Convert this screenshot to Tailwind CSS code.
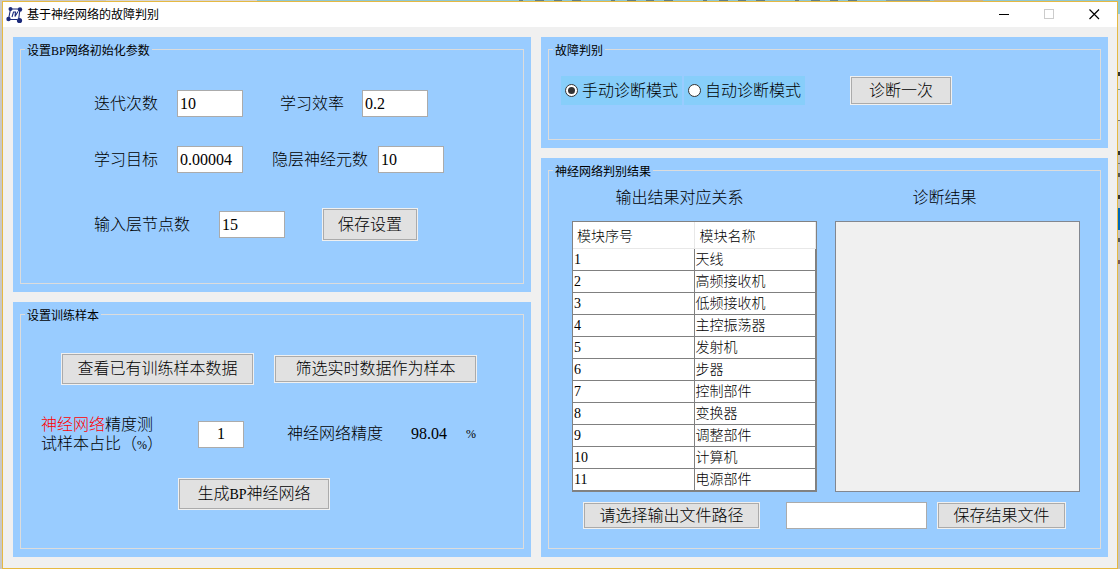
<!DOCTYPE html>
<html lang="zh-CN">
<head>
<meta charset="utf-8">
<title>基于神经网络的故障判别</title>
<script src="https://cdn.jsdelivr.net/npm/@tailwindcss/browser@4"></script>
</head>
<body class="min-h-screen flex flex-col bg-[#c8c8c8] text-black text-base leading-5 font-light font-['Liberation_Serif','Noto_Sans_CJK_SC',serif]">

<!-- Desktop strip above the window -->
<div class="flex h-px bg-[#8ec8d4]" aria-hidden="true">
  <span class="w-[106px] bg-[#c8c8c8]"></span>
  <span class="w-[151px] bg-[#d6d6d6]"></span>
  <span class="flex-1"></span>
  <span class="w-[340px] bg-[repeating-linear-gradient(90deg,#5d8088_0_4px,#8ec8d4_4px_16px,#5d8088_16px_25px,#8ec8d4_25px_35px,#5d8088_35px_43px,#8ec8d4_43px_53px,#5d8088_53px_62px,#8ec8d4_62px_92px)]"></span>
  <span class="w-[27px]"></span>
  <span class="w-[44px] bg-[#7f9ea6]"></span>
  <span class="w-1"></span>
  <span class="w-[49px] bg-[#c9b08f]"></span>
  <span class="w-[137px]"></span>
</div>

<div class="flex flex-1 pl-[2px]">
<div class="flex flex-1 flex-col border border-[#e6b942] bg-[#f0f0f0]">
  <header class="flex h-[25px] items-center bg-white">
    <svg class="ml-[3px] h-[18px] w-[18px]" viewBox="0 0 18 18" fill="none" stroke="#1b2a7b" aria-hidden="true">
      <path d="M4.500 3H14L12.500 14.500M4.500 3L2.500 13.500H11" stroke-width="1.100"/>
      <path d="M6 11L7.500 6H9.500L9 10.500L12 5.500" stroke-width="1.100"/>
      <g fill="#1b2a7b" stroke="none"><circle cx="4.500" cy="3" r="2"/><circle cx="14" cy="3.500" r="2.200"/><circle cx="2.500" cy="13" r="2.200"/><circle cx="13.500" cy="14.500" r="2.600"/></g>
    </svg>
    <h1 class="ml-[3px] flex-1 pb-px text-xs font-normal font-['Noto_Sans_CJK_SC',sans-serif]">基于神经网络的故障判别</h1>
    <button type="button" aria-label="最小化" class="flex h-full w-[45px] items-center justify-center">
      <svg class="h-[11px] w-[11px]" viewBox="0 0 11 11" shape-rendering="crispEdges"><path d="M0 5.500H10" stroke="#000"/></svg>
    </button>
    <button type="button" aria-label="最大化" disabled class="flex h-full w-[45px] items-center justify-center">
      <svg class="h-[11px] w-[11px]" viewBox="0 0 11 11" fill="none" shape-rendering="crispEdges"><path d="M.5 .5H9.500V9.500H.5Z" stroke="#ccc"/></svg>
    </button>
    <button type="button" aria-label="关闭" class="flex h-full w-[45px] items-center justify-center">
      <svg class="h-[11px] w-[11px]" viewBox="0 0 11 11" fill="none"><path d="M.5 .5L10 10M10 .5L.5 10" stroke="#000" stroke-width="1.200"/></svg>
    </button>
  </header>

  <main class="grid flex-1 grid-cols-[518fr_567fr] gap-[10px] pt-[10px] pr-[9px] pb-[11px] pl-[10px]">
    <div class="flex flex-col gap-[10px]">

      <form class="flex flex-1 bg-[#99ccff] px-[7px] pt-[3px] pb-2">
        <fieldset class="flex-1 border border-[#dcdcdc]">
          <legend class="ml-[4px] px-[2px] pt-1 text-xs leading-[14px] font-normal">设置<span class="font-['Liberation_Serif']">BP</span>网络初始化参数</legend>
          <div class="pt-8 pl-[73px]">
            <div class="flex items-center">
              <label for="iter">迭代次数</label>
              <input id="iter" value="10" class="ml-[19px] h-[27px] w-[66px] border border-[#ababab] bg-white px-[2px]">
              <label for="rate" class="ml-[37px]">学习效率</label>
              <input id="rate" value="0.2" class="ml-[18px] h-[27px] w-[66px] border border-[#ababab] bg-white px-[2px]">
            </div>
            <div class="mt-[29px] flex items-center">
              <label for="goal">学习目标</label>
              <input id="goal" value="0.00004" class="ml-[19px] h-[27px] w-[66px] border border-[#ababab] bg-white px-[2px]">
              <label for="hidden-n" class="ml-[29px]">隐层神经元数</label>
              <input id="hidden-n" value="10" class="ml-[10px] h-[27px] w-[66px] border border-[#ababab] bg-white px-[2px]">
            </div>
            <div class="mt-[36px] flex items-center">
              <label for="nodes">输入层节点数</label>
              <input id="nodes" value="15" class="ml-[29px] h-[27px] w-[66px] border border-[#ababab] bg-white px-[2px]">
              <button type="button" class="ml-[38px] h-[31px] w-[94px] border border-[#ababab] bg-[#e1e1e1] outline outline-[#f0f0f0]">保存设置</button>
            </div>
          </div>
        </fieldset>
      </form>

      <form class="flex flex-1 bg-[#99ccff] px-[7px] pt-[3px] pb-2">
        <fieldset class="flex-1 border border-[#dcdcdc]">
          <legend class="ml-[4px] px-[2px] pt-1 text-xs leading-[14px] font-normal">设置训练样本</legend>
          <div class="pt-[31px]">
            <div class="flex items-center gap-[22px] pl-[41px]">
              <button type="button" class="h-[30px] w-[191px] border border-[#ababab] bg-[#e1e1e1] outline outline-[#f0f0f0]">查看已有训练样本数据</button>
              <button type="button" class="h-[26px] w-[201px] border border-[#ababab] bg-[#e1e1e1] outline outline-[#f0f0f0]">筛选实时数据作为样本</button>
            </div>
            <div class="mt-[31px] flex items-center pl-[20px]">
              <label for="ratio" class="w-[157px] leading-[19px]"><span class="text-[#ff0000]">神经网络</span>精度测<br>试样本占比（<span class="text-xs leading-none">%</span>）</label>
              <input id="ratio" value="1" class="h-[27px] w-[46px] border border-[#ababab] bg-white text-center">
              <span class="ml-[43px]">神经网络精度</span>
              <output class="ml-7 w-[55px]">98.04</output>
              <span class="text-xs">%</span>
            </div>
            <button type="button" class="mt-[26px] ml-[158px] h-[30px] w-[150px] border border-[#ababab] bg-[#e1e1e1] outline outline-[#f0f0f0]">生成<span class="text-sm">BP</span>神经网络</button>
          </div>
        </fieldset>
      </form>
    </div>

    <div class="flex flex-col gap-[10px]">
      <form class="flex bg-[#99ccff] px-[7px] pt-[3px] pb-2">
        <fieldset class="flex-1 border border-[#dcdcdc]">
          <legend class="ml-[4px] px-[2px] pt-1 text-xs leading-[14px] font-normal">故障判别</legend>
          <div class="flex items-center pt-[18px] pb-[34px] pl-3">
            <label class="flex h-[29px] w-[121px] items-center gap-1 bg-[#87cefa] pl-1">
              <input type="radio" name="mode" checked class="grid h-[13px] w-[13px] appearance-none place-items-center rounded-full border border-[#333] bg-white before:h-[7px] before:w-[7px] before:rounded-full checked:before:bg-[#333]">手动诊断模式</label>
            <label class="ml-[2px] flex h-[29px] w-[121px] items-center gap-1 bg-[#87cefa] pl-1">
              <input type="radio" name="mode" class="grid h-[13px] w-[13px] appearance-none place-items-center rounded-full border border-[#333] bg-white before:h-[7px] before:w-[7px] before:rounded-full checked:before:bg-[#333]">自动诊断模式</label>
            <button type="button" class="ml-[46px] h-[27px] w-[100px] border border-[#ababab] bg-[#e1e1e1] outline outline-[#f0f0f0]">诊断一次</button>
          </div>
        </fieldset>
      </form>

      <form class="flex flex-1 bg-[#99ccff] px-[7px] pt-[3px] pb-2">
        <fieldset class="flex-1 border border-[#dcdcdc]">
          <legend class="ml-[4px] px-[2px] pt-1 text-xs leading-[14px] font-normal">神经网络判别结果</legend>
          <div class="grid grid-cols-2 gap-x-[18px] pt-[9px] pr-5 pl-[23px]">
            <h2 id="map-title" class="pr-[30px] text-center">输出结果对应关系</h2>
            <h2 id="result-title" class="pr-[26px] text-center">诊断结果</h2>
            <div class="mt-[13px] border border-[#828282] bg-white">
              <table aria-labelledby="map-title" class="w-full table-fixed border-separate border-spacing-0 text-left text-sm leading-[21px]">
                <thead>
                  <tr class="h-[27px]">
                    <th class="border-r border-b border-[#e8e8e8] p-0 pt-[2px] pl-1 font-light">模块序号</th>
                    <th class="border-r border-b border-[#e8e8e8] p-0 pt-[2px] pl-[5px] font-light">模块名称</th>
                  </tr>
                </thead>
                <tbody class="[&_td]:h-[22px] [&_td]:border-r [&_td]:border-b [&_td]:border-[#808080] [&_td]:p-0 [&_td]:pl-px">
                  <tr><td>1</td><td>天线</td></tr>
                  <tr><td>2</td><td>高频接收机</td></tr>
                  <tr><td>3</td><td>低频接收机</td></tr>
                  <tr><td>4</td><td>主控振荡器</td></tr>
                  <tr><td>5</td><td>发射机</td></tr>
                  <tr><td>6</td><td>步器</td></tr>
                  <tr><td>7</td><td>控制部件</td></tr>
                  <tr><td>8</td><td>变换器</td></tr>
                  <tr><td>9</td><td>调整部件</td></tr>
                  <tr><td>10</td><td>计算机</td></tr>
                  <tr><td>11</td><td>电源部件</td></tr>
                </tbody>
              </table>
            </div>
            <textarea readonly aria-labelledby="result-title" class="mt-[13px] resize-none border border-[#828790] bg-[#f0f0f0] p-1"></textarea>
          </div>
          <div class="flex items-center pt-[10px] pl-[35px]">
            <button type="button" class="h-[25px] w-[175px] border border-[#ababab] bg-[#e1e1e1] outline outline-[#f0f0f0]">请选择输出文件路径</button>
            <input aria-label="输出文件路径" class="ml-[27px] h-[27px] w-[141px] border border-[#ababab] bg-white px-[2px]">
            <button type="button" class="ml-[11px] h-[25px] w-[127px] border border-[#ababab] bg-[#e1e1e1] outline outline-[#f0f0f0]">保存结果文件</button>
          </div>
        </fieldset>
      </form>
    </div>
  </main>
</div>

<!-- Desktop strip to the right of the window -->
<div class="flex w-[2px] flex-col bg-[#c4c4c4]" aria-hidden="true">
  <span class="h-[13px] bg-[#8ec8d4]"></span>
  <span class="h-[58px] bg-[#e4e4e4]"></span>
  <span class="h-1 bg-[#333]"></span>
  <span class="h-[13px] bg-[#e4e4e4]"></span>
  <span class="h-px bg-[#6f9a9a]"></span>
  <span class="h-[30px] bg-[#e4e4e4]"></span>
  <span class="h-px bg-[#777]"></span>
  <span class="h-[30px] bg-[#dcdcdc]"></span>
  <span class="h-1 bg-[#333]"></span>
  <span class="h-[8px]"></span>
  <span class="h-px bg-[#777]"></span>
  <span class="h-[9px]"></span>
  <span class="h-1 bg-[#555]"></span>
  <span class="h-[18px]"></span>
  <span class="h-1 bg-[#333]"></span>
  <span class="h-[9px]"></span>
  <span class="h-[22px] bg-[#0067b5]"></span>
  <span class="h-2"></span>
  <span class="h-1 bg-[#555]"></span>
  <span class="h-[18px]"></span>
  <span class="h-1 bg-[#7a5a5a]"></span>
</div>
</div>
</body>
</html>
